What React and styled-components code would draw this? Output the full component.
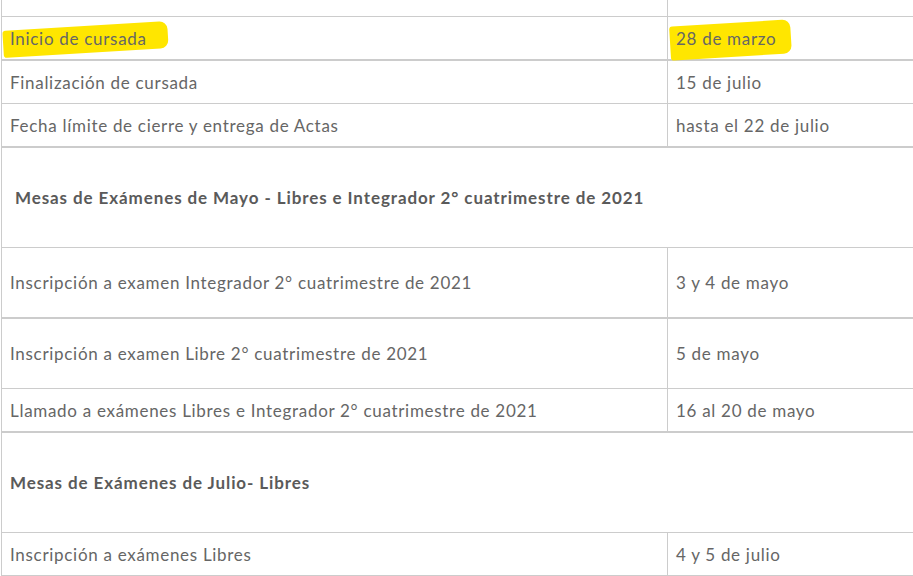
import styled, { createGlobalStyle } from "styled-components";

const GlobalStyle = createGlobalStyle`
  html, body {
    margin: 0;
    padding: 0;
    background: #fff;
    overflow: hidden;
  }
  body {
    font-family: "Lato", "Open Sans", sans-serif;
    color: #666;
  }
`;

const Page = styled.div`
  width: 913px;
  height: 576px;
  overflow: hidden;
  padding-left: 1px;
  box-sizing: border-box;
`;

const Table = styled.div`
  display: flex;
  flex-direction: column;
  width: 920px;
  margin-top: -26px;
  border-left: 1px solid #ccc;
`;

const Row = styled.div`
  display: flex;
  height: ${({ $h }) => $h}px;
  border-bottom: ${({ $b }) => $b || 1}px solid #ccc;
`;

const Cell = styled.div`
  display: flex;
  align-items: center;
  box-sizing: border-box;
  padding: 0 8px;
  font-size: 17px;
  letter-spacing: 0.7px;
  white-space: nowrap;

  &:first-child {
    width: 666px;
    border-right: 1px solid #ccc;
  }
  &:last-child {
    flex: 1;
  }
`;

const HeadCell = styled.div`
  display: flex;
  align-items: center;
  flex: 1;
  padding: 0 8px;
  font-size: 17px;
  font-weight: 700;
  letter-spacing: 0.9px;
  color: #5a5a5a;
  white-space: pre;
`;

const Marker = styled.span`
  position: relative;
  z-index: 0;

  &::before {
    content: "";
    position: absolute;
    z-index: -1;
    left: ${({ $l }) => $l}px;
    right: ${({ $r }) => $r}px;
    top: ${({ $t }) => $t}px;
    bottom: ${({ $bt }) => $bt}px;
    background: #ffe600;
    border-radius: 3px 8px 8px 3px;
    transform: rotate(-3.5deg);
  }
`;

const rows = [
  { a: "", b: "", h: 42, bd: 1 },
  { a: "Inicio de cursada", b: "28 de marzo", h: 42, bd: 2, mark: true },
  { a: "Finalización de cursada", b: "15 de julio", h: 42, bd: 1 },
  { a: "Fecha límite de cierre y entrega de Actas", b: "hasta el 22 de julio", h: 42, bd: 2 },
  { head: " Mesas de Exámenes de Mayo - Libres e Integrador 2° cuatrimestre de 2021", h: 99, bd: 1 },
  { a: "Inscripción a examen Integrador 2° cuatrimestre de 2021", b: "3 y 4 de mayo", h: 69, bd: 2 },
  { a: "Inscripción a examen Libre 2° cuatrimestre de 2021", b: "5 de mayo", h: 69, bd: 1 },
  { a: "Llamado a exámenes Libres e Integrador 2° cuatrimestre de 2021", b: "16 al 20 de mayo", h: 42, bd: 2 },
  { head: "Mesas de Exámenes de Julio- Libres", h: 99, bd: 1 },
  { a: "Inscripción a exámenes Libres", b: "4 y 5 de julio", h: 42, bd: 1 },
];

export default function App() {
  return (
    <Page>
      <GlobalStyle />
      <Table>
        {rows.map((r, i) =>
          r.head ? (
            <Row key={i} $h={r.h} $b={r.bd}>
              <HeadCell>{r.head}</HeadCell>
            </Row>
          ) : (
            <Row key={i} $h={r.h} $b={r.bd}>
              <Cell>
                {r.mark ? (
                  <Marker $l={-7} $r={-21} $t={-2} $bt={-4}>
                    {r.a}
                  </Marker>
                ) : (
                  r.a
                )}
              </Cell>
              <Cell>
                {r.mark ? (
                  <Marker $l={-6} $r={-15} $t={-5} $bt={-8}>
                    {r.b}
                  </Marker>
                ) : (
                  r.b
                )}
              </Cell>
            </Row>
          )
        )}
      </Table>
    </Page>
  );
}
